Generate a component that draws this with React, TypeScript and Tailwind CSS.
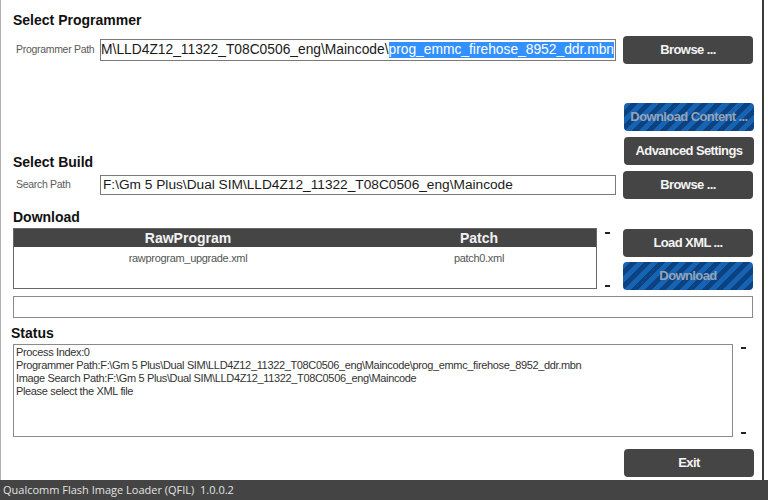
import { FunctionComponent } from "react";

const stripes =
  "bg-[repeating-linear-gradient(135deg,#1763b3_0px,#1763b3_5px,#0c427f_5px,#0c427f_10px)]";

const DarkButton: FunctionComponent<{ label: string }> = ({ label }) => (
  <button className="w-[130px] h-[28px] rounded-[4px] bg-[#454545] text-[#f4f4f4] text-[13px] font-bold tracking-[-0.6px] flex items-center justify-center">
    {label}
  </button>
);

const BlueButton: FunctionComponent<{ label: string }> = ({ label }) => (
  <button
    className={`w-[130px] h-[28px] rounded-[4px] ${stripes} text-[#93a4b8] text-[13px] font-bold tracking-[-0.6px] flex items-center justify-center`}
  >
    {label}
  </button>
);

const Dash = () => <div className="w-[5px] h-[2px] bg-[#222]" />;

const statusLines = [
  "Process Index:0",
  "Programmer Path:F:\\Gm 5 Plus\\Dual SIM\\LLD4Z12_11322_T08C0506_eng\\Maincode\\prog_emmc_firehose_8952_ddr.mbn",
  "Image Search Path:F:\\Gm 5 Plus\\Dual SIM\\LLD4Z12_11322_T08C0506_eng\\Maincode",
  "Please select the XML file",
];

const App: FunctionComponent = () => {
  return (
    <div className="w-[768px] h-[500px] flex flex-col bg-white font-['Liberation_Sans',Arial,sans-serif] overflow-hidden">
      <div className="h-[480px] flex">
        <div className="w-[762px] border-l border-[#b0b0b0] pl-[12px] pt-[12px] flex flex-col">
          {/* Select Programmer */}
          <h2 className="h-[16px] text-[14px] leading-[16px] font-bold text-[#111]">Select Programmer</h2>
          <div className="mt-[8px] h-[28px] flex items-center">
            <div className="w-[87px] pl-[3px] text-[10.5px] text-[#5a5a5a] tracking-[-0.3px] whitespace-nowrap">Programmer Path</div>
            <div className="w-[516px] h-[22px] border border-[#7a7a7a] flex items-center justify-end overflow-hidden whitespace-nowrap pr-[1px] text-[13.8px] text-[#1a1a1a]">
              <span>F:\Gm 5 Plus\Dual SIM\LLD4Z12_11322_T08C0506_eng\Maincode\</span>
              <span className="bg-[#3390ff] text-white leading-[16px]">prog_emmc_firehose_8952_ddr.mbn</span>
            </div>
            <div className="ml-[7px]">
              <DarkButton label="Browse ..." />
            </div>
          </div>

          <div className="mt-[39px] flex justify-end w-[741px]">
            <BlueButton label="Download Content ..." />
          </div>

          {/* Select Build */}
          <div className="mt-[6px] h-[28px] flex items-end justify-between w-[741px]">
            <h2 className="h-[16px] mb-[-5px] text-[14px] leading-[16px] font-bold text-[#111]">Select Build</h2>
            <DarkButton label="Advanced Settings" />
          </div>
          <div className="mt-[6px] h-[28px] flex items-center">
            <div className="w-[87px] pl-[3px] text-[10.5px] text-[#5a5a5a] tracking-[-0.3px] whitespace-nowrap">Search Path</div>
            <div className="w-[516px] h-[20px] border border-[#7a7a7a] flex items-center overflow-hidden whitespace-nowrap pl-[2px] text-[13.7px] text-[#1a1a1a]">
              F:\Gm 5 Plus\Dual SIM\LLD4Z12_11322_T08C0506_eng\Maincode
            </div>
            <div className="ml-[7px]">
              <DarkButton label="Browse ..." />
            </div>
          </div>

          {/* Download */}
          <h2 className="mt-[10px] h-[16px] text-[14px] leading-[16px] font-bold text-[#111]">Download</h2>
          <div className="mt-[3px] h-[62px] flex">
            <div className="w-[584px] h-[61px] border border-[#666] flex flex-col">
              <div className="h-[18px] bg-[#454545] flex text-[14px] font-bold text-[#f2f2f2] leading-[18px]">
                <div className="w-[348px] text-center">RawProgram</div>
                <div className="flex-1 text-center">Patch</div>
              </div>
              <div className="flex text-[11px] text-[#555] tracking-[-0.3px] pt-[3px]">
                <div className="w-[348px] text-center">rawprogram_upgrade.xml</div>
                <div className="flex-1 text-center">patch0.xml</div>
              </div>
            </div>
            <div className="w-[26px] flex flex-col justify-between items-start pl-[8px] pt-[4px] pb-[3px]">
              <Dash />
              <Dash />
            </div>
            <div className="flex flex-col gap-[5px] pt-[1px]">
              <DarkButton label="Load XML ..." />
              <BlueButton label="Download" />
            </div>
          </div>

          <div className="mt-[6px] w-[740px] h-[22px] border border-[#8a8a8a]" />

          {/* Status */}
          <h2 className="mt-[7px] ml-[-2px] h-[16px] text-[14px] leading-[16px] font-bold text-[#111]">Status</h2>
          <div className="mt-[3px] flex">
            <div className="w-[720px] h-[93px] border border-[#8a8a8a] px-[2px] pt-[1px] text-[11px] leading-[13px] text-[#333] tracking-[-0.35px] whitespace-nowrap overflow-hidden">
              {statusLines.map((line) => (
                <div key={line}>{line}</div>
              ))}
            </div>
            <div className="w-[20px] h-[93px] flex flex-col justify-between items-center pt-[3px] pb-[3px]">
              <Dash />
              <Dash />
            </div>
          </div>

          <div className="mt-[12px] w-[741px] flex justify-end">
            <DarkButton label="Exit" />
          </div>
        </div>
        <div className="w-[2px] bg-[#3a3a3a]" />
        <div className="flex-1" />
      </div>
      <div className="h-[20px] bg-[#444] flex items-center pl-[3px] font-['Open_Sans',sans-serif] text-[11px] text-[#e2e2e2] whitespace-pre">
        Qualcomm Flash Image Loader (QFIL)  1.0.0.2
      </div>
    </div>
  );
};

export default App;
